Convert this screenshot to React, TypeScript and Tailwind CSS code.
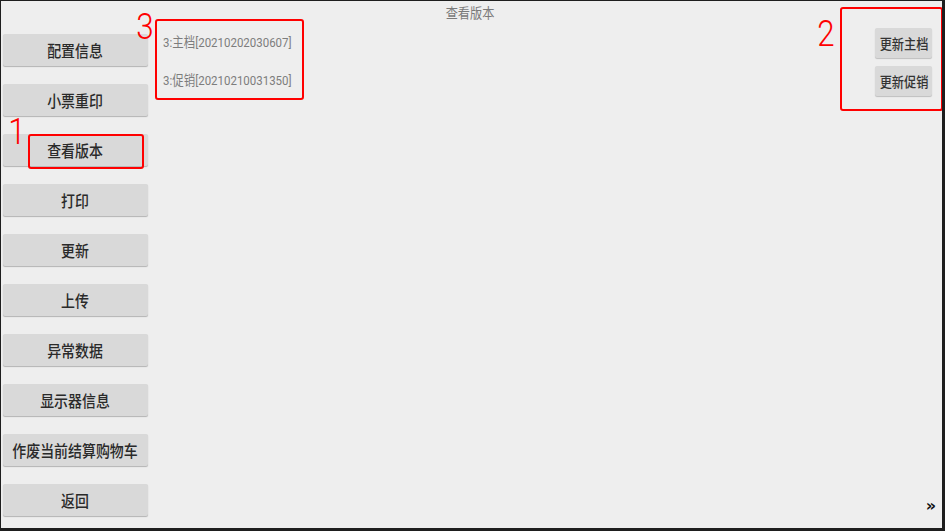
import React from "react";

const cjk = '"Noto Sans CJK SC", "Noto Sans", sans-serif';
const roboto = 'Roboto, "Noto Sans CJK SC", sans-serif';

const leftButtons = [
  "配置信息",
  "小票重印",
  "查看版本",
  "打印",
  "更新",
  "上传",
  "异常数据",
  "显示器信息",
  "作废当前结算购物车",
  "返回",
];

function SideButton({ label }: { label: string }) {
  return (
    <div className="w-[145px] h-[32px] rounded-[2px] bg-[#d9d9d9] shadow-[0_1px_1px_rgba(0,0,0,0.25)] flex items-center justify-center">
      <span
        className="inline-block text-[16px] leading-none font-medium text-[#2a2a2a] scale-x-[0.87] whitespace-nowrap"
        style={{ fontFamily: cjk }}
      >
        {label}
      </span>
    </div>
  );
}

function SmallButton({ label }: { label: string }) {
  return (
    <div className="w-[57px] h-[30px] rounded-[2px] bg-[#d9d9d9] shadow-[0_1px_1px_rgba(0,0,0,0.2)] flex items-center justify-center">
      <span
        className="inline-block text-[14px] leading-none font-medium text-[#333] scale-x-[0.87] whitespace-nowrap"
        style={{ fontFamily: cjk }}
      >
        {label}
      </span>
    </div>
  );
}

export default function App() {
  return (
    <div className="relative w-[945px] h-[531px] bg-[#eeeeee] border-t border-l border-r-[3px] border-b-[3px] border-[#1e1e1e] overflow-hidden flex flex-col">
      {/* header */}
      <div className="h-[21px] flex items-center justify-center">
        <span
          className="inline-block text-[14px] leading-none text-[#7a7a7a] scale-x-[0.87] mr-[4px]"
          style={{ fontFamily: cjk }}
        >
          查看版本
        </span>
      </div>

      <div className="flex flex-1">
        {/* left column */}
        <div className="flex flex-col gap-[18px] pl-[2px] pt-[12px]">
          {leftButtons.map((b) => (
            <SideButton key={b} label={b} />
          ))}
        </div>

        {/* content */}
        <div className="flex-1 flex pl-[15px] pr-[10px]">
          <div className="flex-1 flex flex-col gap-[18px] pt-[11px]">
            <span
              className="inline-block self-start origin-left text-[13.2px] leading-[20px] text-[#7d7d7d] scale-x-[0.87] whitespace-nowrap"
              style={{ fontFamily: roboto }}
            >
              3:主档[20210202030607]
            </span>
            <span
              className="inline-block self-start origin-left text-[13.2px] leading-[20px] text-[#7d7d7d] scale-x-[0.87] whitespace-nowrap"
              style={{ fontFamily: roboto }}
            >
              3:促销[20210210031350]
            </span>
          </div>
          <div className="flex flex-col gap-[8px] pt-[6px]">
            <SmallButton label="更新主档" />
            <SmallButton label="更新促销" />
          </div>
        </div>
      </div>

      {/* » */}
      <span
        className="absolute right-[6px] bottom-[14px] text-[16px] leading-none font-bold text-[#111]"
        style={{ fontFamily: '"DejaVu Sans", sans-serif' }}
      >
        »
      </span>

      {/* annotations */}
      <div className="absolute left-[154px] top-[18px] w-[149px] h-[81px] border-2 border-[#ff0000] rounded-[3px]" />
      <div className="absolute left-[27px] top-[133px] w-[116px] h-[35px] border-2 border-[#ff0000] rounded-[3px]" />
      <div className="absolute left-[839px] top-[6px] w-[103px] h-[104px] border-2 border-[#ff0000] rounded-[3px]" />

      <span
        className="absolute left-[134px] top-[6px] text-[36px] leading-[40px] font-light text-[#ff0000] scale-x-[0.87]"
        style={{ fontFamily: roboto }}
      >
        3
      </span>
      <span
        className="absolute left-[6px] top-[111px] text-[36px] leading-[40px] font-light text-[#ff0000] scale-x-[0.87]"
        style={{ fontFamily: roboto }}
      >
        1
      </span>
      <span
        className="absolute left-[815px] top-[13px] text-[36px] leading-[40px] font-light text-[#ff0000] scale-x-[0.87]"
        style={{ fontFamily: roboto }}
      >
        2
      </span>
    </div>
  );
}
